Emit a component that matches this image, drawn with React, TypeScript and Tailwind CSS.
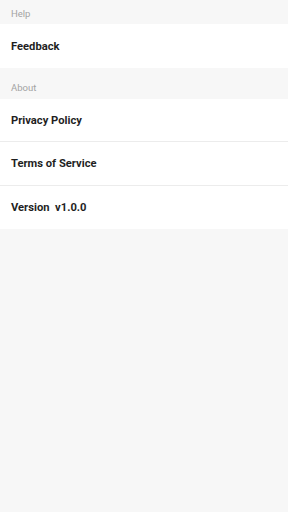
const rowClass =
  "h-[43px] flex items-center px-[11px] pt-[2px] bg-white text-[11.2px] font-bold text-[#1f1f1f]";

function SectionHeader({ label, className }: { label: string; className: string }) {
  return (
    <div className={`flex items-end px-[11px] text-[9.5px] text-[#a3a3a3] ${className}`}>
      {label}
    </div>
  );
}

export default function App() {
  return (
    <div
      className="min-h-[512px] bg-[#f7f7f7]"
      style={{ fontFamily: "Roboto, 'Noto Sans', sans-serif" }}
    >
      <SectionHeader label="Help" className="h-[24px] pb-[3px]" />
      <div className="flex flex-col">
        <div className={`${rowClass} h-[44px]`}>Feedback</div>
      </div>

      <SectionHeader label="About" className="h-[31px] pb-[4px]" />
      <div className="flex flex-col divide-y divide-[#ececec]">
        <div className={rowClass}>Privacy Policy</div>
        <div className={`${rowClass} h-[44px]`}>Terms of Service</div>
        <div className={`${rowClass} h-[43px]`}>
          <span className="whitespace-pre">Version  v1.0.0</span>
        </div>
      </div>
    </div>
  );
}
